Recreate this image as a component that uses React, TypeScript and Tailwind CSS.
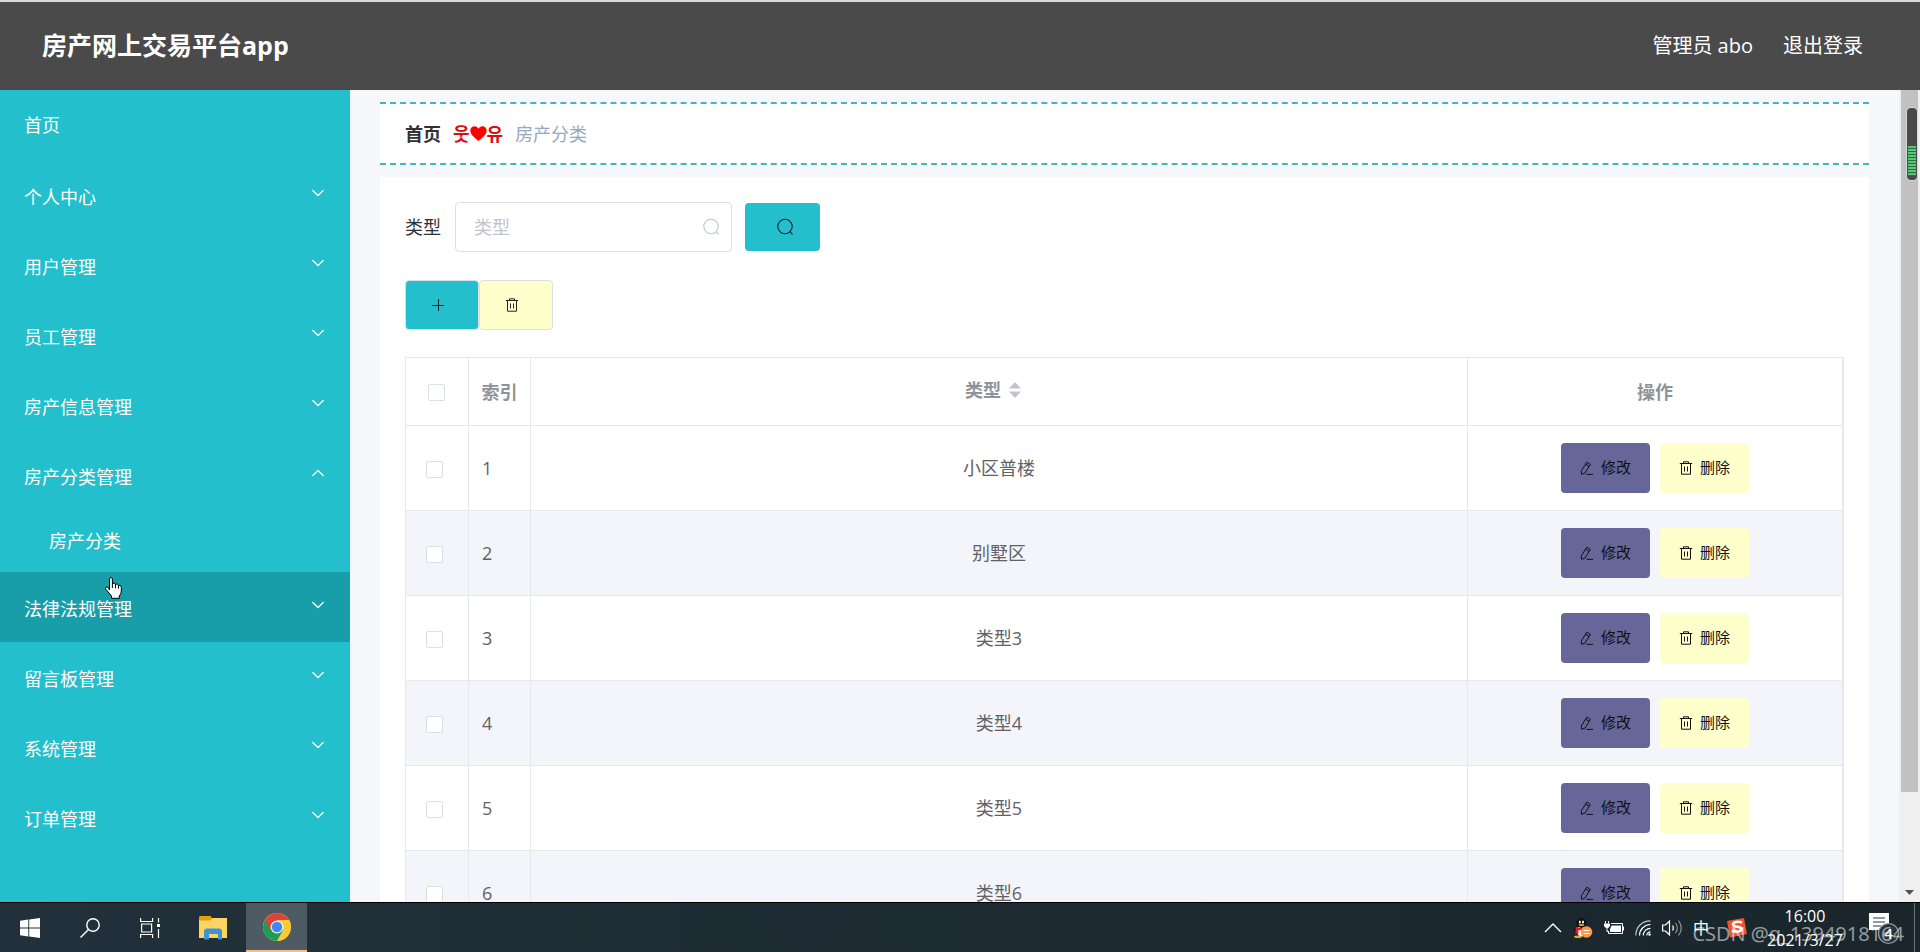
import type { ReactNode } from "react";
import clsx from "clsx";

type MenuItem = { label: string; children?: string[]; plain?: boolean; hovered?: boolean };

const MENU: MenuItem[] = [
  { label: "首页", plain: true },
  { label: "个人中心" },
  { label: "用户管理" },
  { label: "员工管理" },
  { label: "房产信息管理" },
  { label: "房产分类管理", children: ["房产分类"] },
  { label: "法律法规管理", hovered: true },
  { label: "留言板管理" },
  { label: "系统管理" },
  { label: "订单管理" },
];

const ROWS = ["小区普楼", "别墅区", "类型3", "类型4", "类型5", "类型6"];

/* ---------- icons ---------- */

function Chevron({ up }: { up?: boolean }) {
  return (
    <svg width="12" height="8" viewBox="0 0 12 8" fill="none" stroke="currentColor" strokeWidth="1.3" strokeLinecap="round">
      <path d={up ? "M.8 6.5 6 1.5l5.2 5" : "M.8 1.5 6 6.5l5.2-5"} />
    </svg>
  );
}

function SearchIcon() {
  return (
    <svg width="18" height="18" viewBox="0 0 18 18" fill="none" stroke="currentColor" strokeWidth="1.1">
      <circle cx="9" cy="8.5" r="7.2" />
      <path d="m13.8 13.6 2.8 2.8" />
    </svg>
  );
}

function PlusIcon() {
  return (
    <svg width="14" height="14" viewBox="0 0 14 14" stroke="currentColor" strokeWidth="1">
      <path d="M7.5 1v12M1 7.5h12" />
    </svg>
  );
}

function TrashIcon() {
  return (
    <svg width="14" height="14" viewBox="0 0 14 14" fill="none" stroke="currentColor" strokeWidth="1">
      <path d="M.8 2.5h12.4M4.5 2.5V.8h5v1.7M2.5 2.5v10.7h9V2.5M5.5 5.5v5M8.5 5.5v5" />
    </svg>
  );
}

function EditIcon() {
  return (
    <svg width="14" height="14" viewBox="0 0 14 14" fill="none" stroke="currentColor" strokeWidth="1">
      <path d="M6.8 1.2 10.4 3.4 4.9 12.2 1.5 13.2 1.3 9.9zM5.6 3.2l3.6 2.2M6.5 13.4H13" />
    </svg>
  );
}

function HeartIcon() {
  return (
    <svg width="17" height="15" viewBox="0 0 17 15" fill="#f00">
      <path d="M8.5 15C6 12.500.3 9 .3 4.500.3 1.800 2.200.2 4.500.2c1.900 0 3.300 1 4 2.600.7-1.600 2.100-2.600 4-2.600 2.300 0 4.200 1.600 4.200 4.300C16.700 9 11 12.500 8.500 15z" />
    </svg>
  );
}

function SortIcon() {
  return (
    <svg width="12" height="16" viewBox="0 0 12 16" fill="#c0c4cc">
      <path d="M6 0 12 6.5H0zM6 16l6-6.5H0z" />
    </svg>
  );
}

/* ---------- page ---------- */

function Header() {
  return (
    <header className="flex h-[90px] shrink-0 items-center justify-between border-t-2 border-[#d9d9d9] bg-[#4a4a4a] pr-[57px] pl-[42px] text-white">
      <h1 className="text-[25px] font-bold">房产网上交易平台app</h1>
      <div className="flex gap-[30px] text-xl">
        <span>管理员 abo</span>
        <a href="#logout">退出登录</a>
      </div>
    </header>
  );
}

function Sidebar() {
  return (
    <nav className="w-[350px] shrink-0 overflow-hidden bg-[#23bfcc] text-lg text-white">
      <ul>
        {MENU.map((m) => (
          <li key={m.label}>
            <a
              href="#menu"
              className={clsx(
                "flex h-[70px] items-center justify-between pr-[26px] pl-6",
                !m.plain && "pt-1",
                m.hovered && "bg-[#179ea9]",
              )}
            >
              {m.label}
              {!m.plain && (
                <span className="pb-2">
                  <Chevron up={!!m.children} />
                </span>
              )}
            </a>
            {m.children?.map((c) => (
              <a key={c} href="#submenu" className="flex h-[62px] items-center pl-[49px]">
                {c}
              </a>
            ))}
          </li>
        ))}
      </ul>
    </nav>
  );
}

function Breadcrumb() {
  return (
    <div className="flex h-[63px] items-center gap-3 border-y-2 border-dashed border-[#3fb8bd] bg-white px-[25px] text-lg">
      <a href="#home" className="font-bold text-[#303133]">
        首页
      </a>
      <span className="flex items-center font-bold text-[#d80f0f]">
        웃
        <HeartIcon />
        유
      </span>
      <span className="text-[#97a8be]">房产分类</span>
    </div>
  );
}

function Checkbox({ label }: { label: string }) {
  return (
    <input
      type="checkbox"
      aria-label={label}
      className="block size-[17px] appearance-none rounded-xs border border-[#dcdfe6] bg-white"
    />
  );
}

function RowButton({ color, children }: { color: string; children: ReactNode }) {
  return (
    <button type="button" className={clsx("flex h-[50px] w-[89px] items-center justify-center gap-[7px] rounded text-[15px] text-[#111]", color)}>
      {children}
    </button>
  );
}

function CategoryTable() {
  return (
    <div className="border-x border-t border-[#e6e8ec]">
      <table className="w-full table-fixed border-separate border-spacing-0 text-lg text-[#606266]">
        <colgroup>
          <col className="w-[63px]" />
          <col className="w-[62px]" />
          <col />
          <col className="w-[375px]" />
        </colgroup>
        <thead>
          <tr className="h-[68px] text-[#909399]">
            <th className="border-r border-b border-[#e6e8ec] pt-0.5 pl-[22px]">
              <Checkbox label="全选" />
            </th>
            <th className="border-r border-b border-[#e6e8ec]">索引</th>
            <th className="border-r border-b border-[#e6e8ec]">
              <span className="flex items-center justify-center gap-2 pr-3 pb-1">
                类型 <SortIcon />
              </span>
            </th>
            <th className="border-r border-b border-[#e6e8ec]">操作</th>
          </tr>
        </thead>
        <tbody>
          {ROWS.map((name, i) => (
            <tr key={name} className="h-[85px] even:bg-[#f3f5fa]">
              <td className="border-r border-b border-[#e6e8ec] pt-0.5 pl-5">
                <Checkbox label={name} />
              </td>
              <td className="border-r border-b border-[#e6e8ec] pl-[13px]">{i + 1}</td>
              <td className="border-r border-b border-[#e6e8ec] text-center">{name}</td>
              <td className="border-r border-b border-[#e6e8ec]">
                <div className="flex justify-center gap-[10px]">
                  <RowButton color="bg-[#666699]">
                    <EditIcon />
                    修改
                  </RowButton>
                  <RowButton color="bg-[#ffffcc]">
                    <TrashIcon />
                    删除
                  </RowButton>
                </div>
              </td>
            </tr>
          ))}
        </tbody>
      </table>
    </div>
  );
}

function Content() {
  return (
    <main className="min-w-0 flex-1 overflow-hidden bg-[#f5f7fb] px-[30px] pt-3">
      <Breadcrumb />
      <section className="mt-3 bg-white p-[25px]">
        <form className="flex items-center">
          <label htmlFor="type" className="mr-[14px] text-lg text-[#303133]">
            类型
          </label>
          <div className="relative mr-[13px] w-[277px]">
            <input
              id="type"
              placeholder="类型"
              className="h-[50px] w-full rounded border border-[#dcdfe6] bg-white pr-10 pl-[18px] text-lg placeholder:text-[#c0c4cc]"
            />
            <span className="absolute inset-y-0 right-3 flex items-center text-[#c0c4cc]">
              <SearchIcon />
            </span>
          </div>
          <button type="button" aria-label="查询" className="flex h-12 w-[75px] items-center justify-center rounded bg-[#23bfcc] pl-1 text-[#222]">
            <SearchIcon />
          </button>
        </form>

        <div className="mt-7 mb-[27px] flex">
          <button type="button" aria-label="新增" className="flex h-[50px] w-[74px] items-center justify-center rounded border border-[#d5e4e8] bg-[#23bfcc] pr-2 text-[#222]">
            <PlusIcon />
          </button>
          <button type="button" aria-label="批量删除" className="flex h-[50px] w-[74px] items-center justify-center rounded border border-[#dcdfe6] bg-[#ffffcc] pr-2 text-[#222]">
            <TrashIcon />
          </button>
        </div>

        <CategoryTable />
      </section>
    </main>
  );
}

function Scrollbar() {
  return (
    <div aria-hidden className="relative flex w-[21px] shrink-0 flex-col justify-between bg-[#f0f0f0] px-0.5">
      <div className="h-[702px] bg-[#c1c1c1]" />
      <svg className="mx-auto mb-[7px]" width="9" height="5" viewBox="0 0 9 5" fill="#505050">
        <path d="M0 0h9L4.500 5z" />
      </svg>
      {/* floating level meter */}
      <div className="absolute top-[18px] right-[3px] flex h-[72px] w-[10px] flex-col justify-end rounded bg-[#4a4a4a] px-px pb-1 ring-1 ring-[#d8d8d8]">
        <div className="h-[30px] bg-[repeating-linear-gradient(#55c878_0_2px,#2f6b45_2px_3px)]" />
      </div>
    </div>
  );
}

/* ---------- taskbar ---------- */

function WindowsLogo() {
  return (
    <svg width="20" height="20" viewBox="0 0 20 20" fill="#fff">
      <path d="M0 2.800 8.300 1.500V9.500H0zM9.200 1.400 20 0v9.500H9.200zM0 10.400h8.300v8.100L0 17.300zM9.200 10.400H20V20L9.200 18.600z" />
    </svg>
  );
}

function TaskSearchIcon() {
  return (
    <svg width="20" height="20" viewBox="0 0 20 20" fill="none" stroke="#fff" strokeWidth="1.400">
      <circle cx="13" cy="7" r="6.200" />
      <path d="M8.500 11.500.5 19.500" />
    </svg>
  );
}

function TaskViewIcon() {
  return (
    <svg width="20" height="20" viewBox="0 0 20 20" fill="none" stroke="#fff" strokeWidth="1.200">
      <path d="M.6 0v3.500h12V0M.6 20v-3.500h12V20M1.600 6h10v8h-10zM18.500 0v4.500M18.500 11v9" />
      <path d="M17 6h3v3h-3z" fill="#fff" stroke="none" />
    </svg>
  );
}

function ExplorerIcon() {
  return (
    <svg width="28" height="24" viewBox="0 0 28 24">
      <path d="M0 1.500C0 .6.500 0 1.500 0h10l1.500 2v3H0z" fill="#e3a008" />
      <path d="M0 4.500h11.500l2-2.500H28v20H0z" fill="#fcd462" />
      <path d="M5 23.500V14.500L7 12.500h14l2 2v9h-4v-5.500h-9v5.500z" fill="#3d94d1" />
    </svg>
  );
}

function ChromeIcon() {
  return (
    <svg width="28" height="28" viewBox="0 0 28 28">
      <circle cx="14" cy="14" r="14" fill="#fbc934" />
      <path d="M14 14 1.900 7A14 14 0 0 0 14 28l6.100-10.500z" fill="#1a9e57" />
      <path d="M14 14 7.900 17.500 1.900 7A14 14 0 0 1 26.100 7z" fill="#db4437" />
      <path d="M14 7h12.100A14 14 0 0 1 14 28l6.100-10.500z" fill="#fbc934" />
      <circle cx="14" cy="14" r="6.500" fill="#f1f1f1" />
      <circle cx="14" cy="14" r="5.200" fill="#4285f4" />
    </svg>
  );
}

function QQIcon() {
  return (
    <svg width="20" height="20" viewBox="0 0 20 20">
      <path d="M3.500 7Q0 10.500 1 14q1 .5 2-1zM12.500 7q3 3 3 6z" fill="#111" />
      <ellipse cx="8.500" cy="12" rx="6" ry="6.500" fill="#111" />
      <ellipse cx="8.500" cy="13" rx="4.500" ry="5.500" fill="#fff" />
      <ellipse cx="8.500" cy="5" rx="5" ry="5" fill="#111" />
      <ellipse cx="6.800" cy="4" rx="1" ry="1.500" fill="#fff" />
      <ellipse cx="10" cy="4" rx="1" ry="1.500" fill="#fff" />
      <ellipse cx="8.500" cy="7" rx="3" ry="1" fill="#f5a623" />
      <path d="M2.500 8.500q6 3 12 0v2.500q-5 2-9 1v3.500h-3z" fill="#e02020" />
      <ellipse cx="5" cy="18.800" rx="4" ry="1.200" fill="#f5a623" />
      <circle cx="13.500" cy="14" r="5.800" fill="#f79a4b" />
      <path d="M10.500 12.500h6M10.500 15.500h6" stroke="#fff" strokeWidth="1.200" />
    </svg>
  );
}

function BatteryIcon() {
  return (
    <svg width="20" height="14" viewBox="0 0 20 14" fill="none" stroke="#fff" strokeWidth="1">
      <path d="M7 2.500h11.500v10h-14V10M19.500 5.500v4" />
      <path d="M7.500 4.500h9.500v6.500H6V8z" fill="#fff" stroke="none" />
      <path d="M1.500 0v2.500M4.500 0v2.500M3 6v4.500h1.500" />
      <path d="M0 2.500h6v2Q5.500 7 3 7T0 4.500z" fill="#fff" stroke="none" />
    </svg>
  );
}

function WifiIcon() {
  return (
    <svg width="16" height="16" viewBox="0 0 16 16" fill="none" stroke="#fff" strokeWidth="1.200">
      <path d="M.8 15.500C.8 7 7 .8 15.500.8" opacity=".75" />
      <path d="M4.500 15.500c0-6 5-11 11-11M8.300 15.500c0-4 3.200-7.200 7.200-7.200M11.800 15.500c0-2 1.700-3.700 3.700-3.700" />
      <circle cx="14.500" cy="14.500" r="1.200" fill="#fff" stroke="none" />
    </svg>
  );
}

function VolumeIcon() {
  return (
    <svg width="20" height="18" viewBox="0 0 20 18" fill="none" stroke="#fff" strokeWidth="1.200">
      <path d="M.6 6v6h2.900l4 3.800V2.200L3.500 6z" />
      <path d="M10.500 6.500q1.800 2.500 0 5" />
      <path d="M13.500 4q3.500 5 0 10M16.500 1.500q5.500 7.500 0 15" opacity=".5" />
    </svg>
  );
}

function SogouIcon() {
  return (
    <svg width="20" height="20" viewBox="0 0 20 20">
      <path d="M0 3 17 0l3 16L3 19.500z" fill="#f0532d" />
      <path d="M15 4.500c-4-1.500-9-.5-9 2 0 3 8.500 1.500 8.500 4.500 0 2.500-5.500 3.500-9.500 1.500" fill="none" stroke="#fff" strokeWidth="2.600" />
    </svg>
  );
}

function NoticeIcon() {
  return (
    <svg width="34" height="34" viewBox="0 0 34 34" fontFamily="Open Sans">
      <path d="M0 2h20v17h-5v4l-4-4H0z" fill="#fff" />
      <path d="M4 7h12M4 11h12M4 15h8" stroke="#26323a" strokeWidth="1.200" />
      <circle cx="19.500" cy="22.500" r="10" fill="#28343b" stroke="#9aa1a6" strokeWidth="1.200" />
      <text x="19.500" y="28" textAnchor="middle" fontSize="15" fontWeight="600" fill="#fff">
        4
      </text>
    </svg>
  );
}

function Taskbar() {
  return (
    <footer className="relative flex h-[50px] shrink-0 items-stretch justify-between border-t border-black bg-linear-to-r from-[#21303a] to-[#1a262c] text-white">
      <div className="flex">
        <button type="button" aria-label="开始" className="flex w-[60px] items-center justify-center">
          <WindowsLogo />
        </button>
        <button type="button" aria-label="搜索" className="flex w-[60px] items-center justify-center">
          <TaskSearchIcon />
        </button>
        <button type="button" aria-label="任务视图" className="flex w-[60px] items-center justify-center">
          <TaskViewIcon />
        </button>
        <button type="button" aria-label="文件资源管理器" className="flex w-[66px] items-center justify-center">
          <ExplorerIcon />
        </button>
        <button type="button" aria-label="Chrome" className="flex w-[61px] items-center justify-center border-b-2 border-[#f3c083] bg-[#4f5b64]">
          <ChromeIcon />
        </button>
      </div>

      <div className="flex items-center">
        <div className="flex items-center gap-[11px]">
          <svg width="18" height="10" viewBox="0 0 18 10" fill="none" stroke="#fff" strokeWidth="1.400">
            <path d="m1 9 8-8 8 8" />
          </svg>
          <QQIcon />
          <BatteryIcon />
          <WifiIcon />
          <VolumeIcon />
          <span className="text-base">中</span>
        </div>
        <span className="ml-[18px]">
          <SogouIcon />
        </span>
        <div className="ml-[18px] w-20 text-center text-base leading-6">
          <div>16:00</div>
          <div>2021/3/27</div>
        </div>
        <span className="ml-6">
          <NoticeIcon />
        </span>
        <span className="ml-[11px] h-full w-[6px] border-l border-[#66727a]" />
      </div>

      {/* watermark lies over the tray */}
      <span className="absolute right-4 bottom-1 text-xl whitespace-nowrap text-white/55">
        CSDN @q_1394918164
      </span>
    </footer>
  );
}

function HandCursor() {
  return (
    <svg aria-hidden className="pointer-events-none absolute top-[577px] left-[105px]" width="17" height="22" viewBox="0 0 17 22">
      <path
        d="M4.500 13V1.800Q4.500.6 6 .6T7.400 1.800V7.500Q7.500 6 9 6t1.500 2Q11 6.800 12.200 7t1.300 2Q14 8 15 8.300t1.300 2V14q0 3-2 5v2.300H6.500V19L1 12.500Q0 11 1 10.200t2.300.3z"
        fill="#fff"
        stroke="#000"
      />
      <path d="M7.400 7.500V11M10.500 8v3.300M13.500 9v2.600" stroke="#000" />
    </svg>
  );
}

export default function App() {
  return (
    <div className="relative flex h-screen flex-col overflow-hidden font-['Open_Sans','Noto_Sans_CJK_SC',sans-serif]">
      <Header />
      <div className="flex min-h-0 flex-1">
        <Sidebar />
        <Content />
        <Scrollbar />
      </div>
      <Taskbar />
      <HandCursor />
    </div>
  );
}
